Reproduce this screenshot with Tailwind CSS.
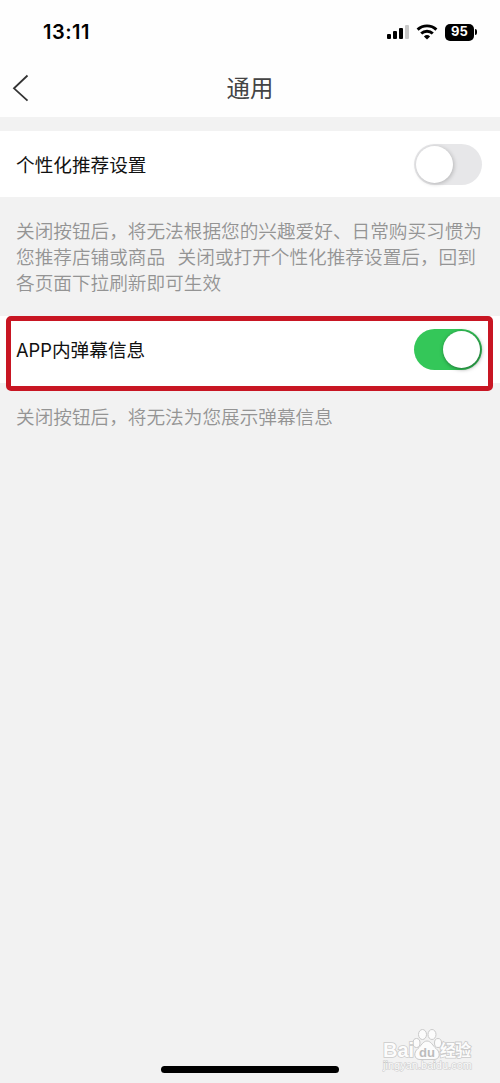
<!DOCTYPE html>
<html lang="zh-CN">
<head>
  <meta charset="UTF-8">
  <meta name="viewport" content="width=device-width, initial-scale=1.0">
  <title>通用</title>
  <script src="https://cdn.jsdelivr.net/npm/@tailwindcss/browser@4"></script>
</head>
<body class="bg-[#f2f2f2] font-['Noto_Sans_CJK_SC',sans-serif] text-[18.65px]">
  <div class="relative flex h-[1083px] w-[500px] flex-col overflow-hidden">

    <!-- Status bar -->
    <div class="flex h-[60px] shrink-0 items-center justify-between bg-[#fefefe] pt-1 pr-[23px] pl-[43px]">
      <span class="font-['Inter',sans-serif] text-[20px] leading-6 font-semibold tracking-[0.5px] text-black">13:11</span>
      <div class="flex items-center">
        <svg class="h-4 w-[22px]" viewBox="0 0 22 16">
          <rect x="0" y="10" width="4" height="5" rx="1"/>
          <rect x="6" y="7" width="4" height="8" rx="1"/>
          <rect x="12" y="4" width="4" height="11" rx="1"/>
          <rect x="18" y="1" width="4" height="14" rx="1" fill="#c8c8c8"/>
        </svg>
        <svg class="ml-[7px] h-4 w-[22px]" viewBox="0 0 22 16" fill="none" stroke="#000" stroke-width="2.9">
          <path d="M1.6 5.6a13.6 13.6 0 0 1 18.8 0"/>
          <path d="M5.2 9.5a8.4 8.4 0 0 1 11.6 0"/>
          <path d="M11 15.5L7.9 12.5a4.5 4.5 0 0 1 6.2 0z" fill="#000" stroke="none"/>
        </svg>
        <div class="ml-[7px] flex h-[17px] w-[29px] items-center justify-center rounded-[5px] bg-black font-['Inter',sans-serif] text-[13px] font-bold text-white">95</div>
        <div class="ml-px h-[6px] w-[2px] rounded-r-full bg-black"></div>
      </div>
    </div>

    <!-- Title bar -->
    <header class="relative flex h-[57px] shrink-0 items-center justify-center bg-[#fefefe] pb-1">
      <svg class="absolute top-[14px] left-[12px] h-7 w-[18px]" viewBox="0 0 18 28" fill="none" stroke="#333" stroke-width="1.8">
        <path d="M15.5 1.5L2 14.3l13.5 12.4"/>
      </svg>
      <h1 class="text-[23.4px] leading-8 text-[#444]">通用</h1>
    </header>

    <!-- Settings -->
    <main class="pt-[14px]">
      <div class="flex h-[66px] items-center justify-between bg-white pr-[18px] pl-4">
        <span class="text-[#111]">个性化推荐设置</span>
        <div class="flex h-[41px] w-[68px] items-center rounded-full bg-[#e7e7e9] pl-[2px]">
          <div class="size-[37px] rounded-full bg-white shadow-[1px_1px_4px_rgba(0,0,0,0.22)]"></div>
        </div>
      </div>
      <p class="px-4 pt-5 pb-[21px] leading-[26px] font-[350] whitespace-nowrap text-[#949494]">关闭按钮后，将无法根据您的兴趣爱好、日常购买习惯为<br>您推荐店铺或商品&nbsp;&nbsp;&nbsp;关闭或打开个性化推荐设置后，回到<br>各页面下拉刷新即可生效</p>
      <div class="relative flex h-[67px] items-center justify-between bg-white pr-[18px] pl-4">
        <div class="absolute top-0 left-[6px] h-[75px] w-[487px] rounded-[5px] border-[5px] border-[#c81623] bg-white"></div>
        <span class="relative text-[#111]"><span class="font-['Inter',sans-serif] text-[18.3px]">APP</span>内弹幕信息</span>
        <div class="relative flex h-[41px] w-[68px] items-center justify-end rounded-full bg-[#34c759] pr-[2px]">
          <div class="size-[37px] rounded-full bg-white shadow-[1px_1px_4px_rgba(0,0,0,0.5)]"></div>
        </div>
      </div>
      <p class="px-4 pt-5 leading-[26px] font-[350] text-[#949494]">关闭按钮后，将无法为您展示弹幕信息</p>
    </main>

    <!-- Watermark -->
    <div class="absolute top-[1026px] left-[382px] h-[48px] w-[96px]">
      <svg class="size-full" viewBox="0 0 96 48" fill="#fcfcfc" stroke="#cacaca" stroke-width="1">
        <ellipse cx="34.5" cy="17" rx="3.5" ry="4.5"/>
        <ellipse cx="40.5" cy="8.5" rx="4" ry="5"/>
        <ellipse cx="50" cy="8.5" rx="4" ry="5"/>
        <ellipse cx="56" cy="17" rx="3.5" ry="4.5"/>
        <path d="M45 15c-4 0-6 5-9 7.5c-5 4-4 11 2 11h14c6 0 7-7 2-11c-3-2.5-5-7.5-9-7.5z"/>
        <g font-family="Liberation Sans, sans-serif" font-weight="bold" paint-order="stroke" stroke-width="1.6">
          <text x="1" y="31" font-size="20" textLength="31" lengthAdjust="spacingAndGlyphs">Bai</text>
          <text x="37" y="31" font-size="13" textLength="16" lengthAdjust="spacingAndGlyphs" fill="#bcbcbc" stroke="none">du</text>
          <text x="58" y="30" font-size="16" textLength="31" font-family="Noto Sans CJK SC, sans-serif">经验</text>
          <text x="1" y="43" font-size="10" textLength="89" lengthAdjust="spacingAndGlyphs" font-weight="normal" stroke-width="1">jingyan.baidu.com</text>
        </g>
      </svg>
    </div>

    <!-- Home indicator -->
    <div class="absolute top-[1066px] left-[161px] h-[7px] w-[178px] rounded-full bg-black"></div>
  </div>
</body>
</html>
